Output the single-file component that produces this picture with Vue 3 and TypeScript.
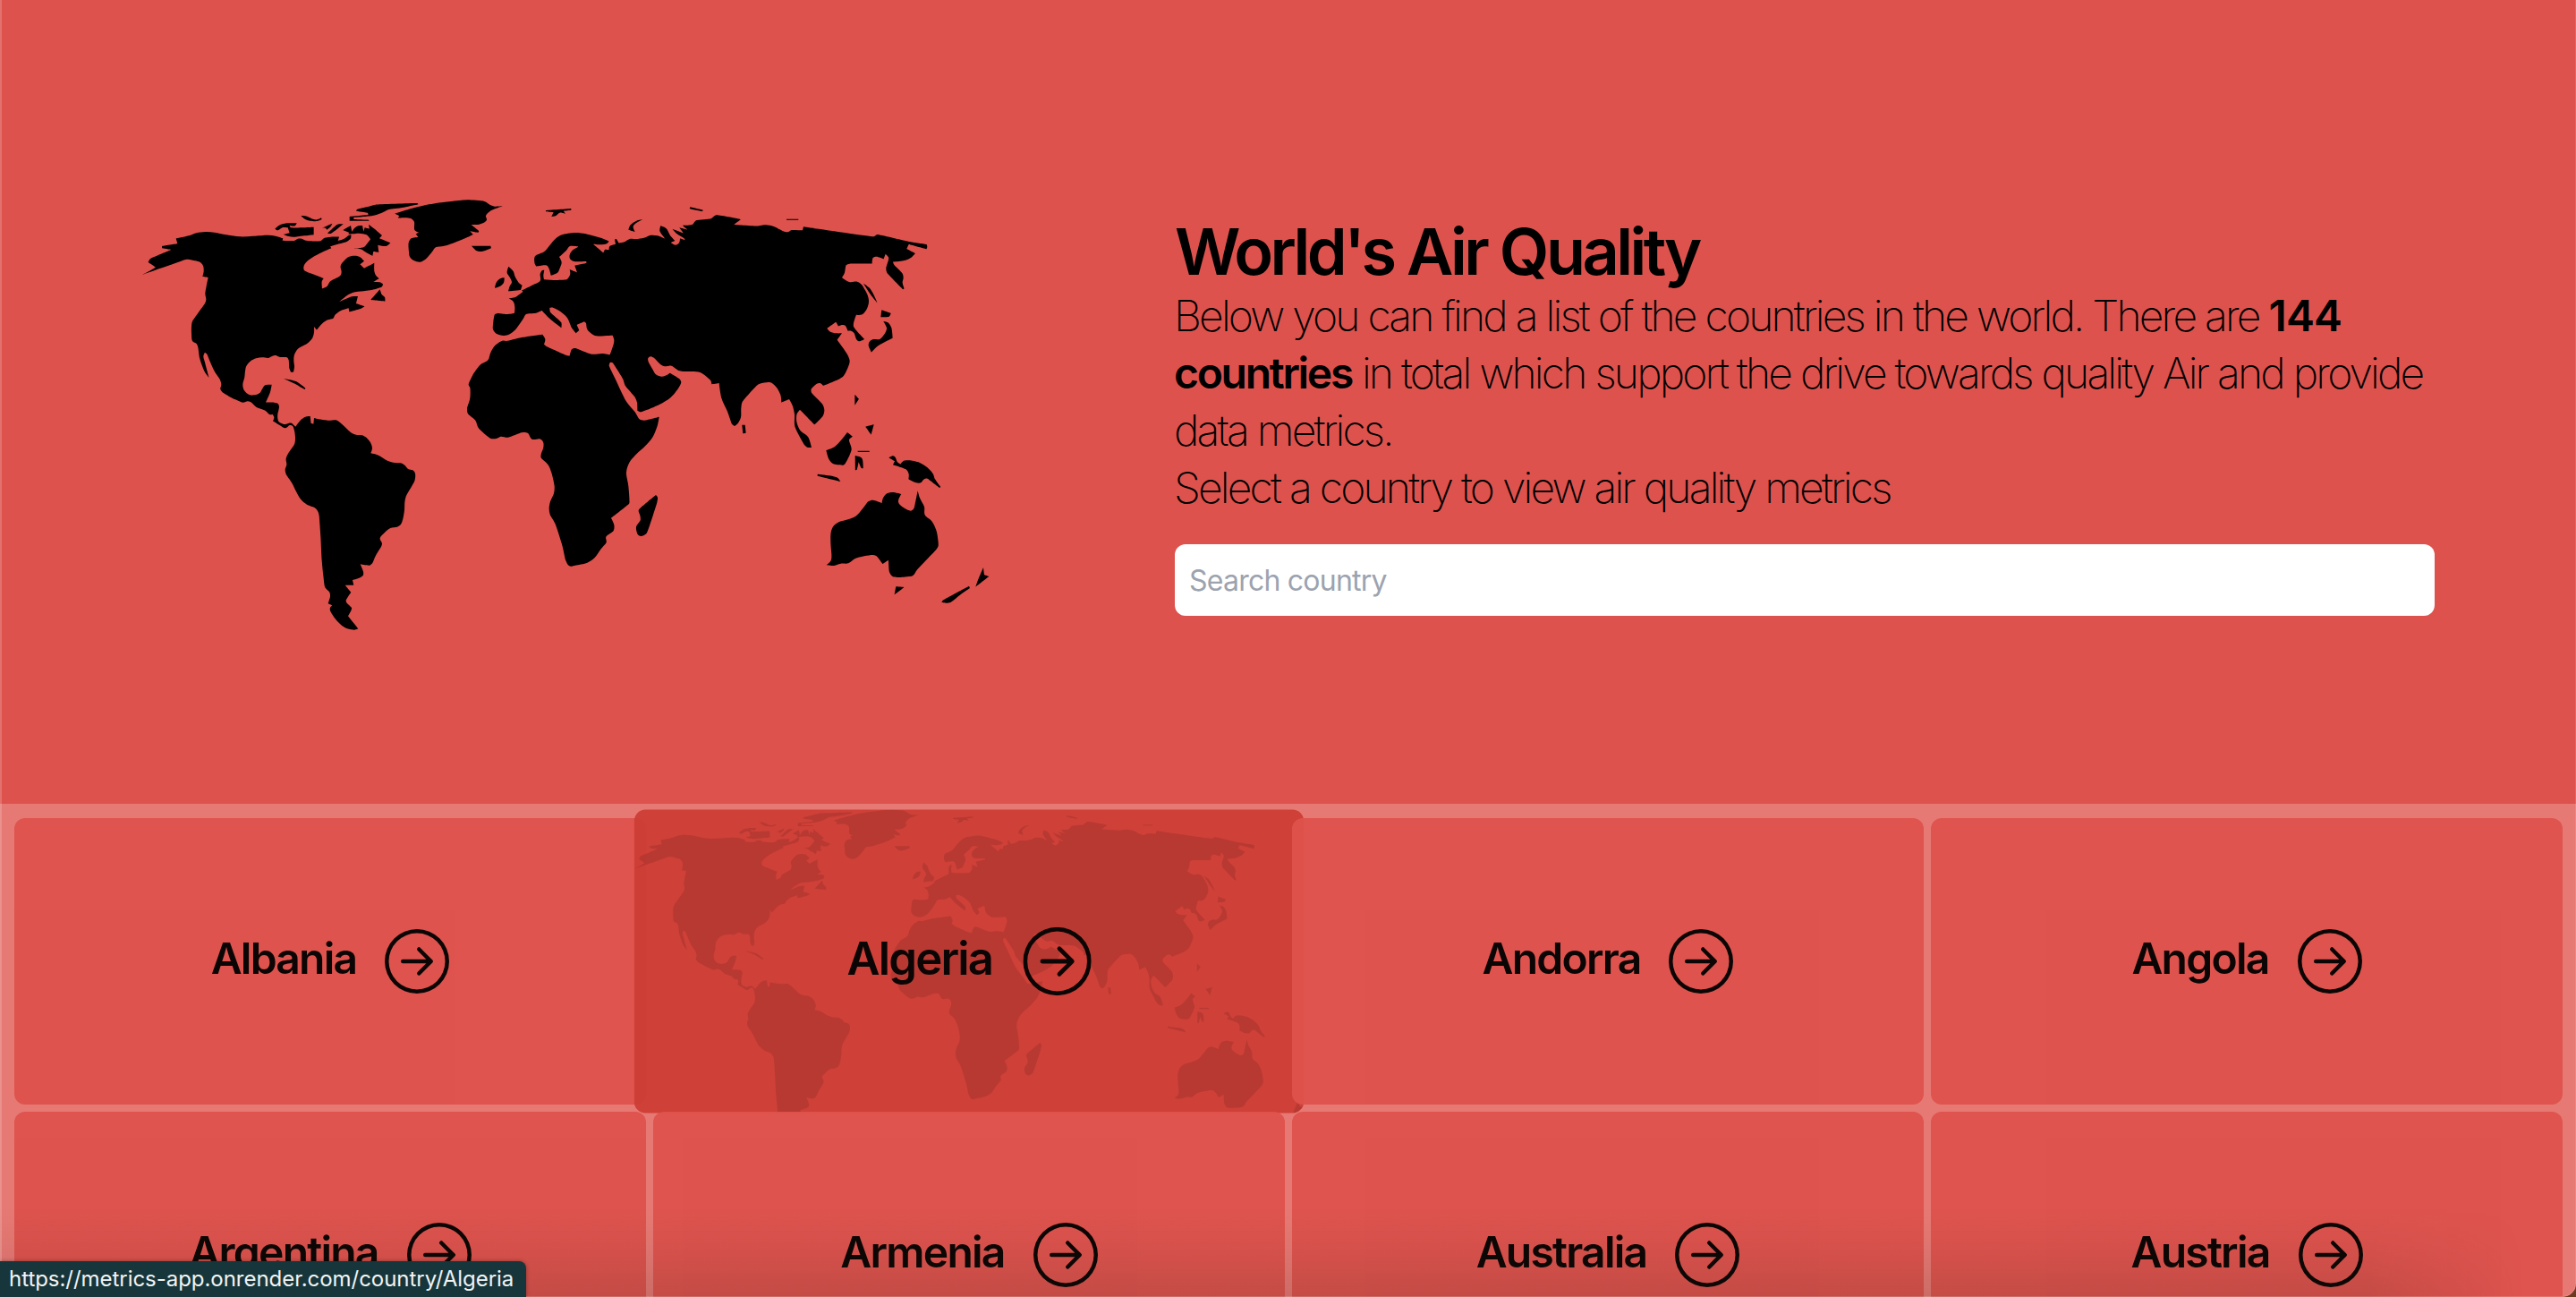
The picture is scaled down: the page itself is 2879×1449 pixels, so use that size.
<script setup lang="ts">
import { ref } from 'vue'

type Point = [number, number]

interface Region {
  dx: number
  dy: number
  outlines: string[]
}

const query = ref('')
const hovered = 'Algeria'
const countries = ['Albania', 'Algeria', 'Andorra', 'Angola', 'Argentina', 'Armenia', 'Australia', 'Austria']

const arrowCircle =
  'M1 8a7 7 0 1 0 14 0A7 7 0 0 0 1 8zm15 0A8 8 0 1 1 0 8a8 8 0 0 1 16 0zM4.5 7.5a.5.5 0 0 0 0 1h5.793l-2.147 2.146a.5.5 0 0 0 .708.708l3-3a.5.5 0 0 0 0-.708l-3-3a.5.5 0 1 0-.708.708L10.293 7.5H4.5z'

// Coastlines, grouped by region; each region has its own origin on the map.
const regions: Region[] = [
  {
    dx: 0,
    dy: 0,
    outlines: [
      '171,200 218,190 240,182 270,178 300,180 340,188 385,194 430,192 480,189 505,192 530,200 528,207 568,208 578,202 592,201 606,207 655,209 668,199 690,195 718,195 714,208 735,201 750,190 758,188 757,200 745,210 720,218 688,227 692,233 660,247 630,263 610,278 600,292 601,307 630,320 666,334 660,345 661,368 678,360 687,345 705,335 722,325 726,312 723,292 735,275 750,262 770,258 787,262 802,276 788,287 802,300 836,282 836,310 842,325 852,334 833,346 855,347 865,353 862,362 840,370 800,377 765,381 745,391 718,413 760,395 781,394 775,418 804,428 790,436 752,446 750,434 720,444 704,457 698,468 680,473 662,485 643,507 634,496 634,515 628,535 610,553 580,570 568,590 566,610 568,630 565,648 556,648 551,635 549,608 543,599 520,598 505,592 493,595 480,601 460,599 440,602 420,612 407,628 403,645 401,665 395,690 400,710 415,723 435,725 452,718 460,705 470,692 492,690 487,715 472,750 500,750 513,754 517,765 512,790 512,803 516,815 530,822 538,823 550,819 560,820 566,826 572,831 590,808 605,798 621,796 624,820 632,822 634,802 650,806 680,810 708,809 720,816 740,834 760,852 775,858 795,860 812,870 823,884 829,903 824,920 850,927 880,945 905,952 925,953 938,960 950,973 965,977 973,988 972,1010 962,1030 942,1065 938,1085 937,1110 932,1140 925,1158 912,1167 890,1171 870,1187 855,1205 862,1222 858,1235 840,1265 830,1288 820,1296 789,1292 799,1317 798,1330 785,1338 763,1345 767,1362 738,1362 758,1386 741,1413 744,1422 760,1438 758,1448 748,1466 782,1508 770,1512 745,1508 725,1496 705,1475 688,1448 688,1438 695,1430 681,1424 688,1400 686,1386 671,1370 665,1330 660,1280 656,1200 651,1130 648,1118 640,1106 630,1100 610,1092 590,1075 575,1050 560,1020 540,990 537,975 542,958 540,938 548,920 568,890 571,870 568,845 562,828 552,826 538,836 520,827 496,812 500,800 495,790 485,790 470,777 440,765 425,751 412,746 395,750 370,740 330,718 320,705 323,690 318,672 300,645 285,612 275,588 268,582 263,595 268,615 282,667 268,648 258,625 250,600 245,565 240,553 226,544 223,520 223,495 226,478 245,450 268,418 272,405 269,385 273,360 279,331 260,328 264,310 262,292 252,280 235,275 208,270 150,290 100,307 58,322 103,297 78,280 85,268 100,261 155,238 124,233 124,226 176,218',
      '532,670 548,673 575,680 605,702 603,706 590,699 570,687 550,678',
      '503,168 520,155 545,149 576,149 570,158 552,157 556,164 633,162 633,188 615,190 590,192 570,195 545,192 532,187 552,182 546,164 530,163 512,173',
      '590,124 610,126 630,135 645,137 658,131 660,136 645,142 620,141 603,135',
      '661,165 695,150 690,160 677,171 672,165',
      '679,183 700,163 713,153 732,152 710,170 690,184',
      '753,127 775,125 816,121 814,114 775,108 778,103 810,95 840,87 980,82 984,86 935,96 885,103 860,115 830,124 766,130 768,136 818,138 818,141 753,141',
      '731,172 757,157 761,178 770,165 782,158 796,157 800,177 804,164 820,168 817,153 835,167 862,190 853,200 890,215 876,226 848,222 851,247 833,244 830,259 805,245 790,236 769,234 800,230 812,218 823,203 810,188 785,183 765,185 748,186 752,181',
      '855,371 861,388 871,397 872,411 824,406',
      '905,117 960,100 1000,90 1060,80 1120,73 1150,71 1205,76 1225,88 1240,93 1266,92 1225,108 1210,124 1213,138 1200,149 1183,154 1161,154 1187,175 1184,181 1157,176 1167,187 1140,200 1100,216 1070,225 1042,230 1030,245 1010,268 990,279 970,275 955,262 952,245 951,215 960,200 983,196 975,185 985,180 971,172 970,145 962,135 945,131 915,132 920,124',
      '1162,225 1226,225 1228,233 1210,240 1190,244 1178,241'
    ]
  },
  {
    dx: 1080,
    dy: 0,
    outlines: [
      '331,106 416,100 416,105 390,108 398,118 378,114 365,124 350,127 357,113 331,110',
      '160,366 165,348 178,335 192,332 190,348 178,360',
      '206,294 222,310 228,328 240,348 252,357 247,373 205,377 210,360 217,347 210,330 201,315',
      '656,137 635,148 624,160 630,178 608,171 615,155 635,141',
      '815,95 858,105 856,110 813,101',
      '160,455 170,451 200,454 226,450 227,430 222,412 206,401 230,396 255,378 250,375 285,357 312,342 312,320 318,308 326,306 323,325 325,338 360,340 400,338 408,330 413,318 411,304 436,314 428,291 467,283 467,277 425,277 412,268 411,255 420,240 440,228 412,226 400,240 376,262 384,280 378,300 370,315 348,324 343,305 336,292 325,290 300,294 294,285 295,260 325,245 345,222 365,200 385,188 430,181 465,185 520,200 543,210 535,218 515,221 490,219 524,248 529,237 543,238 545,226 565,219 562,203 568,202 576,216 595,212 612,202 640,202 665,197 680,190 705,191 730,201 727,196 713,175 716,158 735,167 748,190 764,208 750,214 765,222 778,215 781,200 798,206 795,200 770,184 755,168 792,182 779,164 806,171 789,156 822,154 835,140 885,134 902,122 985,136 962,154 1050,159 1080,156 1080,682 1060,684 1042,690 990,748 986,770 985,800 975,820 964,829 955,822 940,780 920,735 912,685 887,689 884,677 850,650 820,646 780,644 752,627 730,629 715,622 695,602 683,596 674,602 675,613 690,640 700,656 720,663 735,659 747,651 778,670 785,682 775,703 750,733 710,758 650,782 638,777 637,750 630,732 597,693 590,672 555,617 547,615 543,626 565,673 600,745 630,782 645,806 660,810 711,798 706,825 690,865 665,895 635,923 612,950 601,985 608,1030 611,1088 600,1098 550,1137 560,1160 558,1180 533,1200 534,1219 515,1242 495,1270 470,1287 430,1296 410,1298 398,1280 385,1225 362,1155 345,1125 342,1105 346,1082 358,1055 360,1030 350,985 338,958 315,935 316,920 323,900 322,882 310,872 285,873 270,852 250,851 205,867 180,864 165,871 145,870 105,835 95,810 70,788 67,770 77,735 77,700 72,690 85,660 110,625 137,608 145,585 160,560 185,543 200,544 250,532 320,522 329,538 325,555 335,563 400,592 411,594 418,572 430,568 485,588 520,586 546,590 558,555 560,540 555,525 500,527 485,520 470,505 466,485 460,479 435,490 443,508 432,518 418,500 402,465 375,442 355,432 344,433 346,447 383,482 383,500 345,470 318,442 298,450 265,454 255,470 230,505 210,521 190,526 165,519 154,505 155,480',
      '700,1060 706,1068 704,1085 690,1130 668,1190 650,1198 640,1193 634,1168 648,1145 647,1128 642,1112 650,1102',
      '989,825 999,825 1002,852 992,854'
    ]
  },
  {
    dx: 1920,
    dy: 60,
    outlines: [
      '200,99 228,95 255,100 285,115 302,119 315,112 352,113 355,101 590,134 602,127 710,151 768,160 770,168 767,176 708,160 701,175 730,190 715,205 690,215 655,219 660,230 687,258 690,272 687,288 693,308 689,311 635,255 632,240 640,212 640,203 630,192 624,209 600,201 588,205 585,225 510,225 498,230 493,255 484,271 508,286 535,285 550,295 570,330 574,352 568,375 552,395 532,396 527,410 523,435 560,478 541,485 532,478 525,458 515,450 504,450 495,432 485,430 472,434 464,420 434,441 445,453 465,458 484,458 468,480 500,525 510,550 505,570 490,600 470,614 421,634 412,626 400,627 381,645 382,657 418,695 425,715 420,735 392,764 343,714 333,728 332,755 345,785 370,805 382,841 368,840 358,832 326,770 325,730 318,700 307,679 281,690 278,665 265,640 248,624 230,621 205,628 200,632',
      '298,75 338,75 338,78 298,78',
      '556,291 575,305 590,328 603,357 585,335',
      '617,380 648,391 642,402 614,404',
      '623,418 638,422 650,440 654,474 605,500 583,522 573,498 578,484 590,478 612,477 630,455 634,440',
      '527,663 541,678 527,699',
      '563,771 591,764 582,798',
      '537,852 576,852 576,856 537,856',
      '502,790 520,804 508,815 516,848 495,895 488,900 455,896 440,880 431,850 460,838 485,812',
      '528,868 551,877 555,911 549,910 540,890 534,915 529,917',
      '402,930 450,936 470,943 479,955 402,936',
      '641,875 655,869 663,874 670,890 680,897 690,886 708,884 745,892 775,912 790,930 795,945 815,973 811,976 780,952 770,945 758,948 748,959 730,958 707,947 708,930 700,915 655,899 661,887',
      '738,986 745,1010 760,1040 762,1067 785,1088 800,1118 806,1150 807,1170 800,1183 735,1252 722,1270 690,1275 655,1274 643,1258 640,1218 620,1231 600,1205 585,1201 530,1212 505,1229 480,1230 455,1237 432,1235 447,1220 449,1200 446,1160 447,1125 455,1105 475,1090 530,1071 572,1022 588,1017 618,1027 622,1010 635,995 655,991 683,997 673,1023 690,1042 715,1053 725,1045 731,1020',
      '665,1307 693,1309 660,1334',
      '958,1243 961,1268 977,1273 932,1308 940,1285',
      '910,1305 913,1312 880,1335 845,1361 818,1360 822,1353'
    ]
  }
]

// Joins the points with curves where the coast bends gently and keeps sharp corners sharp.
function toPath(outline: string, dx: number, dy: number): string {
  const pts: Point[] = outline.split(' ').map((pair) => {
    const [x, y] = pair.split(',').map(Number)
    return [x + dx, y + dy]
  })
  const n = pts.length
  const tangents: Point[] = pts.map((p, i) => {
    const a = pts[(i + n - 1) % n]
    const b = pts[(i + 1) % n]
    const inLen = Math.hypot(p[0] - a[0], p[1] - a[1])
    const outLen = Math.hypot(b[0] - p[0], b[1] - p[1])
    const ux = (p[0] - a[0]) / inLen
    const uy = (p[1] - a[1]) / inLen
    const vx = (b[0] - p[0]) / outLen
    const vy = (b[1] - p[1]) / outLen
    if (ux * vx + uy * vy < 0.45) return [0, 0]
    const tx = ux + vx
    const ty = uy + vy
    const len = Math.hypot(tx, ty)
    const reach = Math.min(inLen, outLen) / 3
    return [(tx / len) * reach, (ty / len) * reach]
  })
  let d = `M${pts[0][0]} ${pts[0][1]}`
  for (let i = 0; i < n; i++) {
    const j = (i + 1) % n
    const c1 = [pts[i][0] + tangents[i][0], pts[i][1] + tangents[i][1]]
    const c2 = [pts[j][0] - tangents[j][0], pts[j][1] - tangents[j][1]]
    d += `C${[...c1, ...c2, ...pts[j]].map((v) => v.toFixed(1)).join(' ')}`
  }
  return d + 'Z'
}

const worldMap = regions.flatMap((r) => r.outlines.map((o) => toPath(o, r.dx, r.dy))).join('')
</script>

<template>
  <div class="page">
    <header class="hero">
      <svg class="map" viewBox="58 70 2842 1444" aria-hidden="true">
        <path :d="worldMap" />
      </svg>
      <div class="intro">
        <h1 class="title">World's Air Quality</h1>
        <p class="lead">
          <span class="line">Below you can find a list of the countries in the world. There are <b class="count">144</b></span>
          <span class="line"><b>countries</b> in total which support the drive towards quality Air and provide</span>
          <span class="line">data metrics.</span>
          <span class="line">Select a country to view air quality metrics</span>
        </p>
        <input v-model="query" class="search" type="text" placeholder="Search country" />
      </div>
    </header>

    <main class="grid">
      <a v-for="name in countries" :key="name" class="card" :class="{ active: name === hovered }">
        <svg v-if="name === hovered" class="card-map" viewBox="58 70 2842 1444" aria-hidden="true">
          <path :d="worldMap" />
        </svg>
        <span class="name">{{ name }}</span>
        <svg class="arrow" viewBox="0 0 16 16" aria-hidden="true"><path :d="arrowCircle" /></svg>
      </a>
    </main>

    <div class="shade"></div>
    <div class="edge"></div>
    <div class="status">https://metrics-app.onrender.com/country/Algeria</div>
  </div>
</template>

<style>
body {
  background: #6b3a22;
  overflow: hidden;
}
</style>

<style scoped>
.page {
  position: relative;
  width: 2879px;
  height: 1449px;
  overflow: hidden;
  border-bottom-right-radius: 15px;
  background: #e77974;
  color: #000;
  font-family: Inter, 'Liberation Sans', sans-serif;
}
.hero {
  display: flex;
  align-items: flex-start;
  height: 898px;
  box-sizing: border-box;
  padding: 223px 158px 0 159px;
  background: #de524d;
}
.map {
  flex: none;
  width: 947.33px;
  height: 481.33px;
}
.intro {
  margin-left: 206.67px;
  margin-top: 22px;
  width: 1408px;
}
.title {
  margin: 0;
  font-size: 72px;
  line-height: 72px;
  font-weight: 600;
  letter-spacing: -3.6px;
  white-space: nowrap;
}
.lead {
  margin: 4px 0 0 -1px;
  font-size: 48px;
  line-height: 64px;
  font-weight: 200;
  letter-spacing: -2.83px;
  word-spacing: 0.2px;
}
.lead b {
  font-weight: 600;
  letter-spacing: -2.3px;
}
.lead .count {
  letter-spacing: -0.9px;
}
.line {
  display: block;
  white-space: nowrap;
}
.search {
  display: block;
  box-sizing: border-box;
  width: 1408px;
  height: 80px;
  margin: 31px 0 0;
  padding: 0 16px;
  border: 0;
  border-radius: 12px;
  background: #fff;
  font-family: inherit;
  font-size: 32px;
  letter-spacing: -0.76px;
}
.search::placeholder {
  color: #9ca3af;
  opacity: 1;
}
.grid {
  display: grid;
  box-sizing: border-box;
  width: 2880px;
  grid-template-columns: repeat(4, 1fr);
  grid-auto-rows: 320px;
  gap: 8px;
  padding: 16px;
}
.card {
  position: relative;
  display: flex;
  align-items: center;
  justify-content: center;
  gap: 32px;
  overflow: hidden;
  border-radius: 12px;
  background: #de524c;
  opacity: 0.95;
}
.active {
  background: #cd3d35;
  transform: scale(1.06);
}
.card-map {
  position: absolute;
  top: 0;
  left: 0;
  width: 100%;
  opacity: 0.11;
}
.name {
  position: relative;
  padding-bottom: 7px;
  font-size: 48px;
  line-height: 64px;
  font-weight: 600;
  letter-spacing: -1.75px;
}
.arrow {
  position: relative;
  width: 72px;
  height: 72px;
}
.shade {
  position: absolute;
  left: 0;
  right: 0;
  bottom: 0;
  height: 100px;
  background: linear-gradient(to bottom, transparent, rgba(40, 30, 20, 0.04) 40%, rgba(40, 30, 20, 0.14));
  mask-image: linear-gradient(to right, #000 92%, transparent 98%);
}
.edge {
  position: absolute;
  inset: 0;
  border-left: 2px solid rgba(255, 255, 255, 0.18);
  border-right: 1px solid rgba(255, 255, 255, 0.12);
  border-bottom: 1px solid rgba(255, 255, 255, 0.18);
  border-bottom-right-radius: 15px;
}
.status {
  position: absolute;
  left: 0;
  bottom: 0;
  box-sizing: border-box;
  width: 588px;
  height: 40px;
  padding-left: 10px;
  border-top-right-radius: 8px;
  background: #17363b;
  color: #f1f3f3;
  box-shadow: 0 0 4px rgba(0, 0, 0, 0.35);
  font-size: 24px;
  line-height: 40px;
  letter-spacing: -0.04px;
  white-space: nowrap;
}
</style>
